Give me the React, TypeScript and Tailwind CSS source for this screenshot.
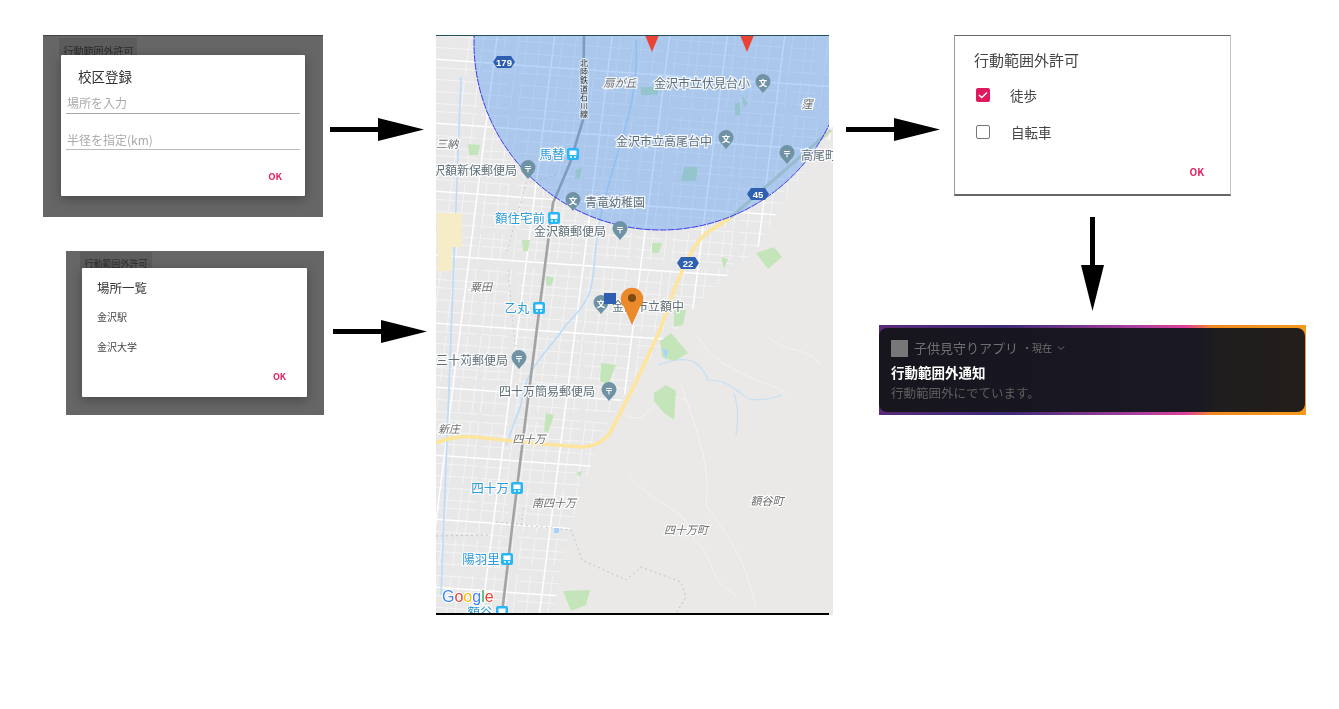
import React from 'react';

const jp = "'Noto Sans CJK JP', sans-serif";

function ArrowRight({ className }: { className?: string }) {
  return (
    <svg width="94" height="23" viewBox="0 0 94 23" className={className}>
      <rect x="0" y="9" width="50" height="5" fill="#000" />
      <polygon points="48,0 94,11.5 48,23" fill="#000" />
    </svg>
  );
}

function ArrowDown({ className }: { className?: string }) {
  return (
    <svg width="23" height="94" viewBox="0 0 23 94" className={className}>
      <rect x="9" y="0" width="5" height="50" fill="#000" />
      <polygon points="0,48 23,48 11.5,94" fill="#000" />
    </svg>
  );
}

function OkButton({ className }: { className: string }) {
  return <span className={`font-bold leading-none text-[#e0245e] ${className}`}>OK</span>;
}

function Backdrop({ className, tabClass, children }: { className: string; tabClass: string; children: React.ReactNode }) {
  return (
    <div className={`flex flex-col bg-[#666666] blur-[0.3px] ${className}`}>
      <div className={`flex shrink-0 justify-center overflow-hidden bg-[#5c5c5c] leading-[15px] whitespace-nowrap text-[#2c2c2c] ${tabClass}`}>
        行動範囲外許可
      </div>
      {children}
    </div>
  );
}

function RegisterCard() {
  return (
    <Backdrop className="h-[182px] w-[280px] border-t border-[#444]" tabClass="mt-[2px] ml-[16px] h-[17px] w-[78px] pt-[5px] pl-[1px] text-[10px]">
      <div className="ml-[18px] flex h-[141px] w-[244px] flex-col rounded-[1px] bg-white px-[5px] shadow-[0_3px_12px_rgba(0,0,0,0.3)]">
        <div className="mt-[11px] ml-[12px] text-[13.5px] leading-[20px] text-[#333]">校区登録</div>
        <div className="mt-[8px] h-[20px] border-b border-[#a8a8a8] pl-px text-[12px] leading-[18px] text-[#aaa]">場所を入力</div>
        <div className="mt-[16px] h-[20px] border-b border-[#bbb] pl-px text-[12px] leading-[19px] text-[#aaa]">半径を指定(km)</div>
        <div className="mt-[22px] flex justify-end pr-[18px]">
          <OkButton className="text-[9.5px]" />
        </div>
      </div>
    </Backdrop>
  );
}

function PlaceListCard() {
  return (
    <Backdrop className="h-[164px] w-[258px]" tabClass="mt-[1px] ml-[14px] h-[16px] w-[72px] pt-[4px] text-[9px]">
      <div className="ml-[16px] flex h-[129px] w-[225px] flex-col rounded-[1px] bg-white pl-[15px] shadow-[0_3px_12px_rgba(0,0,0,0.3)]">
        <div className="mt-[11px] text-[12.5px] leading-[18px] text-[#333]">場所一覧</div>
        <div className="mt-[13px] text-[10px] leading-[14px] text-[#444]">金沢駅</div>
        <div className="mt-[16px] text-[10px] leading-[14px] text-[#444]">金沢大学</div>
        <div className="mt-[18px] flex justify-end pr-[21px]">
          <OkButton className="text-[9px]" />
        </div>
      </div>
    </Backdrop>
  );
}

function PermissionDialog() {
  return (
    <div className="ml-[14px] flex h-[161px] w-[277px] flex-col border border-b-2 border-[#9a9a9a] border-t-[#666] border-r-[#c4c4c4] border-b-[#666] bg-white pl-[19px] blur-[0.3px]">
      <div className="mt-[13px] text-[15px] leading-[22px] text-[#444]">行動範囲外許可</div>
      <div className="mt-[14px] flex h-[20px] items-center">
        <div className="ml-[2px] flex h-[14px] w-[14px] items-center justify-center rounded-[2px] bg-[#e0195f]">
          <svg width="10" height="8" viewBox="0 0 10 8">
            <path d="M1 4 L3.8 6.6 L9 1.4" stroke="#fff" strokeWidth="1.4" fill="none" />
          </svg>
        </div>
        <span className="ml-[20px] text-[13.5px] leading-[20px] text-[#444]">徒歩</span>
      </div>
      <div className="mt-[17px] flex h-[20px] items-center">
        <div className="ml-[2px] h-[14px] w-[14px] rounded-[2px] border-[1.5px] border-[#777]" />
        <span className="ml-[21px] text-[13.5px] leading-[20px] text-[#444]">自転車</span>
      </div>
      <div className="mt-[25px] flex justify-end pr-[26px]">
        <OkButton className="text-[10px]" />
      </div>
    </div>
  );
}

function NotificationBanner() {
  return (
    <div className="ml-[33px] flex h-[90px] w-[427px] flex-col bg-[linear-gradient(90deg,#5a2a78_0%,#3c2a74_30%,#b040a0_62%,#e0409a_72%,#f08a20_78%,#f59a1c_100%)] py-[3px] pr-px blur-[0.3px]">
      <div className="flex h-full flex-col rounded-[8px] bg-[linear-gradient(90deg,#17161f_0%,#191823_75%,#201d1e_80%,#211e1b_100%)] pl-[12px]">
        <div className="mt-[11px] flex h-[18px] items-center">
          <div className="h-[17px] w-[17px] bg-[#777]" />
          <span className="ml-[6px] text-[13px] leading-[18px] text-[#6f6f6f]">子供見守りアプリ</span>
          <span className="ml-[4px] text-[10px] leading-[18px] text-[#6f6f6f]">・現在</span>
          <svg width="8" height="6" viewBox="0 0 8 6" className="ml-[5px]">
            <path d="M1 1.5 L4 4.5 L7 1.5" stroke="#6f6f6f" fill="none" />
          </svg>
        </div>
        <div className="mt-[6px] text-[13.5px] leading-[18px] font-bold text-white">行動範囲外通知</div>
        <div className="mt-[3px] text-[12.5px] leading-[18px] text-[#5f5f5f]">行動範囲外にでています。</div>
      </div>
    </div>
  );
}

// street grid, tilted a bit like the real map
const streetLines: string[] = [];
const majorLines: string[] = [];
for (let i = 0; i < 40; i++) {
  const x0 = -10 + i * 11.5 + ((i * 7) % 5);
  const d = `M${x0 + 45} -5 L${x0 - 30} 590`;
  if (i % 5 === 2) majorLines.push(d);
  else streetLines.push(d);
}
for (let i = 0; i < 56; i++) {
  const y0 = -6 + i * 11 + ((i * 5) % 4);
  const d = `M-5 ${y0 - 6} L400 ${y0 + 22}`;
  if (i % 6 === 3) majorLines.push(d);
  else streetLines.push(d);
}

const parks = [
  'M205 52 L222 52 L222 60 L205 60 Z', 'M248 132 L262 132 L260 146 L245 146 Z', 'M140 135 L146 132 L144 143 L139 144 Z',
  'M299 68 L304 68 L304 80 L299 80 Z', 'M32 109 L44 110 L42 120 L33 120 Z', 'M86 205 L94 205 L92 216 L87 216 Z',
  'M216 208 L226 208 L223 218 L216 218 Z', 'M320 218 L338 212 L346 222 L332 234 Z', 'M285 222 L292 224 L288 234 Z',
  'M110 241 L118 243 L115 251 L110 250 Z', 'M238 275 L250 275 L247 290 L238 292 Z', 'M224 306 L235 298 L252 318 L238 326 L226 322 Z',
  'M165 328 L180 330 L172 350 L164 346 Z', 'M110 378 L118 380 L112 398 L108 396 Z', 'M218 358 L230 350 L240 356 L238 385 L228 378 L218 366 Z',
  'M127 556 L154 555 L150 570 L135 576 Z', 'M140 438 L146 436 L144 442 Z', 'M305 59 L312 68 L308 72 Z',
];

type Poi = { x: number; y: number; glyph: string };
const pois: Poi[] = [
  { x: 327, y: 47, glyph: '文' }, { x: 290, y: 103, glyph: '文' }, { x: 351, y: 118, glyph: '〒' },
  { x: 92, y: 133, glyph: '〒' }, { x: 137, y: 165, glyph: '文' }, { x: 184, y: 194, glyph: '〒' },
  { x: 165, y: 268, glyph: '文' }, { x: 83, y: 323, glyph: '〒' }, { x: 173, y: 355, glyph: '〒' },
];

type Label = { x: number; y: number; t: string; size?: number; anchor?: 'start' | 'middle' };
const grayLabels: Label[] = [
  { x: 266, y: 53, t: '金沢市立伏見台小' }, { x: 228, y: 111, t: '金沢市立高尾台中' }, { x: 365, y: 125, t: '高尾町', anchor: 'start' },
  { x: -3, y: 140, t: '沢額新保郵便局', anchor: 'start' }, { x: 179, y: 172, t: '青竜幼稚園' }, { x: 134, y: 201, t: '金沢額郵便局' },
  { x: 212, y: 276, t: '金沢市立額中' }, { x: 0, y: 330, t: '三十苅郵便局', anchor: 'start' }, { x: 111, y: 361, t: '四十万簡易郵便局' },
];
const italicLabels: Label[] = [
  { x: 184, y: 52, t: '扇が丘' }, { x: 371, y: 73, t: '窪', size: 11 }, { x: 0, y: 113, t: '三納', anchor: 'start' },
  { x: 45, y: 256, t: '粟田' }, { x: 13, y: 398, t: '新庄' }, { x: 93, y: 408, t: '四十万' },
  { x: 118, y: 472, t: '南四十万' }, { x: 331, y: 470, t: '額谷町' }, { x: 250, y: 499, t: '四十万町' },
];
const stations: Label[] = [
  { x: 116, y: 119, t: '馬替' }, { x: 84, y: 183, t: '額住宅前' }, { x: 81, y: 273, t: '乙丸' },
  { x: 54, y: 453, t: '四十万' }, { x: 45, y: 524, t: '陽羽里' }, { x: 44, y: 577, t: '額谷' },
];
const stationIcons = [[137, 119], [118, 183], [103, 273], [81, 453], [71, 524], [66, 577]];

function Shield({ x, y, n }: { x: number; y: number; n: string }) {
  return (
    <g>
      <polygon points={`${x - 11},${y} ${x - 7},${y - 6} ${x + 7},${y - 6} ${x + 11},${y} ${x + 7},${y + 6} ${x - 7},${y + 6}`} fill="#2f5fb0" />
      <text x={x} y={y + 3.5} textAnchor="middle" fontSize="9.5" fontWeight="700" fill="#fff" fontFamily="'Liberation Sans', sans-serif">{n}</text>
    </g>
  );
}

function MapPicture() {
  return (
    <svg width="397" height="580" viewBox="0 0 397 580" className="block shrink-0 blur-[0.5px]" fontFamily={jp}>
      <defs>
        <clipPath id="urban">
          <polygon points="0,0 397,0 397,100 345,170 322,212 262,268 235,300 200,340 165,400 150,445 134,492 117,578 0,578" />
        </clipPath>
        <clipPath id="view">
          <rect x="0" y="0" width="393" height="580" />
        </clipPath>
      </defs>
      <rect width="397" height="580" fill="#ebe9e7" />
      <g clipPath="url(#urban)">
        <rect width="397" height="580" fill="#e8e8e8" />
        <path d={streetLines.join(' ')} stroke="#f5f5f5" strokeWidth="0.9" strokeDasharray="46 5 27 9 63 4" fill="none" />
        <path d={majorLines.join(' ')} stroke="#ffffff" strokeWidth="1.5" fill="none" />
      </g>
      {/* contour-like lanes in the hills */}
      <path d="M194 442 C230 480 250 470 258 505 C280 520 270 545 300 560 M245 350 C262 400 275 430 270 470 C290 500 310 520 320 575 M260 300 C285 340 330 345 350 358 M190 380 C215 395 215 350 250 365 M330 300 C350 320 370 310 385 330" stroke="#f4f3f1" strokeWidth="1" fill="none" />
      <path d="M0 501 L55 500 M60 487 L135 495 L146 525 L190 545 L205 532 L245 547 L250 562 L240 578" stroke="#c4c4c4" strokeWidth="1" strokeDasharray="2 3" fill="none" />
      <path d="M72 235 L80 320 M85 490 L88 470 M120 140 L90 148 L70 220" stroke="#cdcdcd" strokeWidth="1" strokeDasharray="2 3" fill="none" />
      <path d="M25 42 L5 560 M200 5 C205 80 170 130 160 210 C156 250 160 260 130 290 C110 320 90 330 85 370 L70 410" stroke="#bcdcf8" strokeWidth="1.6" fill="none" />
      <path d="M222 330 C245 322 262 320 272 345 C290 345 295 352 305 358 C315 372 345 360 346 360 M298 358 C303 375 302 385 300 400" stroke="#c3e0f5" strokeWidth="1.2" fill="none" />
      {parks.map((d) => <path key={d} d={d} fill="#c4e5b9" />)}
      <path d="M1 178 L26 178 L26 212 L16 212 L16 236 L2 236 Z" fill="#f6edc8" />
      <path d="M226 313 L232 316 L230 325 Z" fill="#a8d8f8" />
      <rect x="118" y="493" width="5" height="5" fill="#a8d0f8" />
      <path d="M294 183 L395 95" stroke="#c9d6ba" strokeWidth="3" fill="none" />
      <path d="M294 183 L272 197 C255 210 247 235 240 250 L224 295 L201 345 L174 398 C166 408 158 411 146 412 L94 408 L40 402 C20 401 10 404 0 408" stroke="#fde59c" strokeWidth="3.6" fill="none" />
      <path d="M148 0 L147 85 L134 128 L117 168 L102 285 L91 372 L77 485 L66 578" stroke="#a3a3a3" strokeWidth="2.6" fill="none" />
      <g clipPath="url(#view)">
        <circle cx="225" cy="8" r="187" fill="#3f8cf0" fillOpacity="0.36" stroke="#3a3ae8" strokeWidth="1" strokeDasharray="7 1" />
        <polygon points="209,0 223,0 216,17" fill="#ea4335" />
        <polygon points="304,0 318,0 311,17" fill="#ea4335" />
      </g>
      <rect x="393" y="0" width="4" height="92" fill="#fff" />
      <Shield x={68} y={27} n="179" />
      <Shield x={322} y={159} n="45" />
      <Shield x={252} y={228} n="22" />
      <g fill="#303030" stroke="#d8e6f5" strokeWidth="2" paintOrder="stroke">
        {['北', '陸', '鉄', '道', '石', '川', '線'].map((c, i) => (
          <text key={c} x={148} y={31 + i * 8.5} textAnchor="middle" fontSize="8">{c}</text>
        ))}
      </g>
      <g stroke="#ffffff" strokeOpacity="0.85" strokeWidth="2.5" paintOrder="stroke">
        {grayLabels.map((l) => (
          <text key={l.t} x={l.x} y={l.y} textAnchor={l.anchor ?? 'middle'} fontSize={l.size ?? 12} fill="#5f6f78">{l.t}</text>
        ))}
        {italicLabels.map((l, i) => (
          <text key={i} x={l.x} y={l.y} textAnchor={l.anchor ?? 'middle'} fontSize={l.size ?? 11} fontStyle="italic" fill="#6e6e6e">{l.t}</text>
        ))}
        {stations.map((l, i) => (
          <text key={i} x={l.x} y={l.y + 4.5} textAnchor="middle" fontSize="12.5" fill="#2f9bd8">{l.t}</text>
        ))}
      </g>
      {pois.map((p) => (
        <g key={`${p.x}-${p.y}`}>
          <path d={`M${p.x} ${p.y + 11} L${p.x - 6} ${p.y + 4} A7.5 7.5 0 1 1 ${p.x + 6} ${p.y + 4} Z`} fill="#6f92a5" />
          <text x={p.x} y={p.y + 3.5} textAnchor="middle" fontSize="8.5" fontWeight="700" fill="#fff">{p.glyph}</text>
        </g>
      ))}
      {stationIcons.map(([x, y]) => (
        <g key={y}>
          <rect x={x - 6} y={y - 6} width="12" height="12" rx="2" fill="#29b6f6" />
          <rect x={x - 3.5} y={y - 3.5} width="7" height="4.5" fill="#fff" />
          <circle cx={x - 2} cy={y + 3} r="1" fill="#fff" />
          <circle cx={x + 2} cy={y + 3} r="1" fill="#fff" />
        </g>
      ))}
      <rect x="168" y="258" width="12" height="11" fill="#2f5fb0" />
      <path d="M196 290 L188 272 A11.3 11.3 0 1 1 204 272 Z" fill="#ea8a2a" />
      <circle cx="196" cy="263" r="4" fill="#7a4a12" />
      <text x="6" y="567" fontFamily="'Liberation Sans', sans-serif" fontSize="16" stroke="#fff" strokeWidth="2" paintOrder="stroke">
        <tspan fill="#4285f4">G</tspan>
        <tspan fill="#ea4335">o</tspan>
        <tspan fill="#fbbc05">o</tspan>
        <tspan fill="#4285f4">g</tspan>
        <tspan fill="#34a853">l</tspan>
        <tspan fill="#ea4335">e</tspan>
      </text>
      <rect x="0" y="0" width="393" height="1" fill="#24525a" />
      <rect x="0" y="578" width="393" height="2" fill="#000" />
    </svg>
  );
}

export default function App() {
  return (
    <div className="flex h-[709px] w-full overflow-hidden bg-white pt-[35px] font-['Noto_Sans_CJK_JP',sans-serif]">
      <div className="flex w-[436px] shrink-0 flex-col pl-[43px]">
        <div className="flex items-start">
          <RegisterCard />
          <ArrowRight className="mt-[83px] ml-[7px]" />
        </div>
        <div className="mt-[34px] ml-[23px] flex items-start">
          <PlaceListCard />
          <ArrowRight className="mt-[69px] ml-[9px]" />
        </div>
      </div>
      <MapPicture />
      <div className="ml-[13px] flex flex-col">
        <div className="flex items-start">
          <ArrowRight className="mt-[83px]" />
          <PermissionDialog />
        </div>
        <ArrowDown className="mt-[21px] ml-[235px]" />
        <div className="mt-[14px]">
          <NotificationBanner />
        </div>
      </div>
    </div>
  );
}
